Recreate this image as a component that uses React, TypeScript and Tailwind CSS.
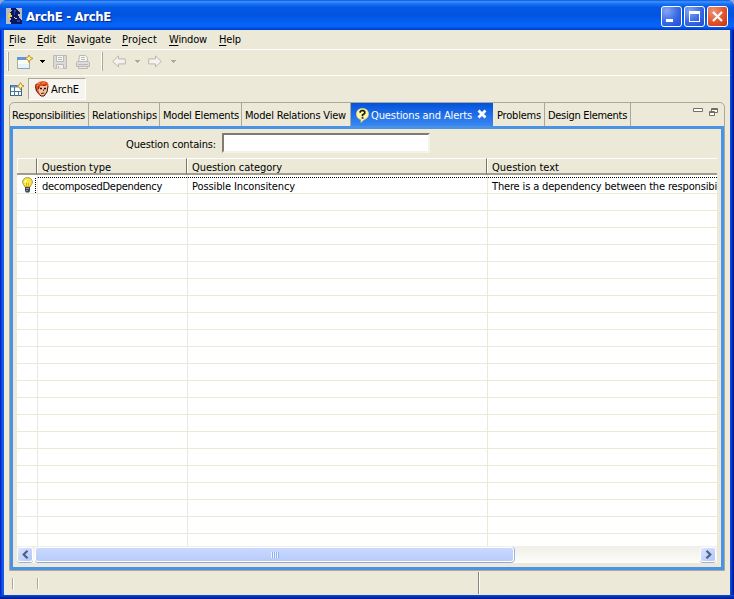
import React, { useLayoutEffect, useRef } from 'react';

/* A single-line label whose tracking is adjusted so that it fills a given width. */
function Label({ w, children, className = '' }: { w: number; children: React.ReactNode; className?: string }) {
  const ref = useRef<HTMLSpanElement>(null);
  useLayoutEffect(() => {
    const el = ref.current;
    if (!el) return;
    el.style.letterSpacing = '0px';
    const n = (el.textContent || '').length;
    el.style.letterSpacing = `${(w - el.getBoundingClientRect().width) / n}px`;
  }, [w]);
  return (
    <span ref={ref} className={`inline-block shrink-0 whitespace-pre pt-[2px] ${className}`}>
      {children}
    </span>
  );
}

const menus = [
  { t: 'File', w: 17, gap: 'mr-[11px]' },
  { t: 'Edit', w: 19, gap: 'mr-[11px]' },
  { t: 'Navigate', w: 44, gap: 'mr-[11px]' },
  { t: 'Project', w: 35, gap: 'mr-[12px]' },
  { t: 'Window', w: 38, gap: 'mr-[12px]' },
  { t: 'Help', w: 22, gap: '' },
];

function AppIcon() {
  return (
    <svg width="16" height="16" viewBox="0 0 16 16" className="shrink-0" shapeRendering="crispEdges">
      <rect width="16" height="16" fill="#b9bcc2" />
      <path d="M5 0h5l2 3 2 2-1 3 1 3 2 1v4H5v-2l-2-1 2-2-2-3 3-2-3-1 3-2z" fill="#0b1668" />
      <path d="M3 5h2v2h1v2H4v3H3V9H2V7h1zM8 9h1v1H8zM9 10h2v1H9zM12 6h1v2h-1z" fill="#e9dc39" />
      <path d="M8 2h2v2H9v3H8zM11 12h3v2h-3z" fill="#2746a8" />
    </svg>
  );
}

function NewIcon() {
  return (
    <svg width="17" height="16" viewBox="0 0 17 16" className="shrink-0">
      <rect x=".5" y="3.500" width="12" height="11" fill="#e4f3fc" stroke="#b5ad88" />
      <path d="M0 3h9v3H0z" fill="#5a9ade" />
      <path d="M1 6h11v4H1z" fill="#fdfdf6" />
      <path d="M1 14.500h12" stroke="#7fa9c4" />
      <path d="M12 1l1.200 2.300L16 4.500l-2.800 1.200L12 8.500l-1.200-2.800L8 4.500l2.800-1.200z" fill="#fff3a0" stroke="#b5882b" strokeWidth=".9" />
    </svg>
  );
}

function PerspectiveIcon() {
  return (
    <svg width="15" height="15" viewBox="0 0 15 15" className="shrink-0">
      <rect x=".5" y="3.500" width="11" height="10" fill="#f8fcff" stroke="#3e6781" />
      <path d="M1 4.500h8" stroke="#5b95c5" strokeWidth="2" />
      <path d="M4.500 5v9M1 9.500h11M8.500 9v5" stroke="#4f7890" />
      <path d="M10.500 .5l1.100 2.300L14 4l-2.400 1.200-1.100 2.600-1.100-2.600L7 4l2.400-1.200z" fill="#fff3a0" stroke="#b5882b" strokeWidth=".9" />
    </svg>
  );
}

function SaveIcon() {
  return (
    <svg width="16" height="16" viewBox="0 0 16 16" className="shrink-0" fill="none" stroke="#b9b9b6">
      <path d="M1.500 1.500h13v13h-12l-1-1z" fill="#d9d9d7" />
      <path d="M4.500 1.500h7v6h-7z" fill="#f6f5f1" />
      <path d="M4.500 14.500v-4h7v4" fill="#f0efea" />
      <path d="M6.500 12v2M6 3.500h4M6 5.500h4" />
    </svg>
  );
}

function PrintIcon() {
  return (
    <svg width="16" height="16" viewBox="0 0 16 16" className="shrink-0" fill="none" stroke="#b9b9b6">
      <path d="M3.500 8.500l1-7h6l2 2-.5 5" fill="#f8f7f3" />
      <path d="M1.500 8.500l1-1h11l1 1v4h-13z" fill="#dcdcd8" />
      <path d="M3.500 12.500h9v2h-9z" fill="#ecebe4" />
      <path d="M6 3.500h4M6 5.500h4M3 10.500h10" />
    </svg>
  );
}

function Arrow({ flip = false }: { flip?: boolean }) {
  return (
    <svg width="14" height="13" viewBox="0 0 14 13" className={`shrink-0 ${flip ? '-scale-x-100' : ''}`}>
      <path d="M.7 6.500L6.500.9v3h6.800v5H6.500v3z" fill="#f4f3ee" stroke="#b9b8b0" />
    </svg>
  );
}

function Caret({ color }: { color: string }) {
  return (
    <svg width="5" height="3" viewBox="0 0 5 3" className="shrink-0" shapeRendering="crispEdges">
      <path d="M0 0h5v1H4v1H3v1H2V2H1V1H0z" fill={color} />
    </svg>
  );
}

function FaceIcon() {
  return (
    <svg width="14" height="16" viewBox="0 0 14 16" className="shrink-0">
      <path d="M3 3h8l2 2-1 6-3 4H6l-3-3-2-3z" fill="#f9c3a0" stroke="#2a130c" />
      <path d="M1 3l3-2 4-1 4 1 1.500 2.500L13 6l-2-2-3 1-3 0-1 3-1.500 1.500L.5 7z" fill="#e2501f" />
      <path d="M3 2.500l2-.5M7 2h3M2 5l1-1" stroke="#ff9a55" />
      <path d="M1 3l-.5 4L2 9.500M4 5l-.5 3M8 4.500L11 4" stroke="#7d1b08" fill="none" />
      <path d="M5 7.500h2M9 7.500h2" stroke="#1b100c" strokeWidth="1.300" />
      <path d="M8.500 8.500v1.500M6 12.500l3.500-.5" stroke="#592317" fill="none" />
      <path d="M3 9.500v2l2 2.500" stroke="#c8361a" strokeWidth="1.300" fill="none" />
    </svg>
  );
}

function WinButton({ kind }: { kind: 'min' | 'max' | 'close' }) {
  const face =
    kind === 'close'
      ? 'bg-[radial-gradient(circle_at_30%_25%,#ef9678,#e2522c_55%,#c5340f)]'
      : 'bg-[radial-gradient(circle_at_25%_20%,#83a6f4,#3769e6_55%,#1e4bd0)]';
  return (
    <div className={`flex h-[21px] w-[21px] shrink-0 items-center justify-center rounded-[3px] border border-white ${face}`}>
      <svg width="19" height="19" viewBox="0 0 19 19">
        {kind === 'min' && <path d="M4 12h7v3H4z" fill="#fff" />}
        {kind === 'max' && <path d="M4 4h11v11H4zM5 7v7h9V7z" fill="#fff" fillRule="evenodd" />}
        {kind === 'close' && <path d="M5 5l9 9M14 5l-9 9" stroke="#fff" strokeWidth="2.200" />}
      </svg>
    </div>
  );
}

function Bulb() {
  return (
    <svg width="11" height="16" viewBox="0 0 11 16" className="shrink-0">
      <path d="M5.500 .6C2.700 .6.6 2.600.6 5c0 2 1.500 3 2.400 5h5c.9-2 2.400-3 2.400-5 0-2.400-2.100-4.400-4.900-4.400z" fill="#f8e73c" stroke="#a58e35" strokeWidth=".9" />
      <path d="M2.500 3.500L4.500 2v3l-2 1z" fill="#fffce0" />
      <path d="M4.500 6v4M6.500 6v4" stroke="#d9b52f" />
      <path d="M3 10h5v4l-1 1.500H4L3 14z" fill="#3f4752" />
      <path d="M4 11.500h3M4 13.500h2" stroke="#a8b4bf" strokeWidth=".8" />
    </svg>
  );
}

function QuestionIcon() {
  return (
    <svg width="13" height="15" viewBox="0 0 13 15" className="shrink-0">
      <path d="M6.500.5c3.500 0 6 2.200 6 5.500 0 3-2 5-4.500 5.500L5 14.500V11.500C2 11 .5 9 .5 6c0-3.300 2.500-5.500 6-5.500z" fill="#fff8a4" stroke="#e7d483" strokeWidth=".7" />
      <path d="M4.200 4.800V3.700L5.500 2.700h2L8.700 3.700v1.600L6.500 7v1.300" fill="none" stroke="#211c12" strokeWidth="1.700" />
      <path d="M5.600 9.200h1.900v1.500H5.600z" fill="#211c12" />
    </svg>
  );
}

function Tab({ text, w, cls }: { text: string; w: number; cls: string }) {
  return (
    <div className={`flex h-full shrink-0 items-center border-r border-[#aca899] ${cls}`}>
      <Label w={w}>{text}</Label>
    </div>
  );
}

function Header({ text, w, cls, last = false }: { text?: string; w?: number; cls: string; last?: boolean }) {
  return (
    <div className={`flex h-[17px] shrink-0 items-center border-b-2 border-t border-b-[#a09d8e] border-t-white ${last ? '' : 'border-r border-r-[#77756a]'} ${cls}`}>
      <div className="h-[14px] w-px shrink-0 bg-white" />
      {text && <Label w={w || 0} className="ml-[4px] mt-[2px]">{text}</Label>}
    </div>
  );
}

function ScrollButton({ right = false }: { right?: boolean }) {
  return (
    <div className="flex h-[15px] w-[16px] shrink-0 items-center justify-center rounded-[3px] border border-white bg-gradient-to-br from-[#dbe5ff] to-[#b2c5f8] shadow-[0_1px_0_#9bb0d9]">
      <svg width="9" height="9" viewBox="0 0 9 9" className={`shrink-0 ${right ? '-scale-x-100' : ''}`}>
        <path d="M6.500 .8L2.700 4.500l3.800 3.700" fill="none" stroke="#4d6185" strokeWidth="2.200" />
      </svg>
    </div>
  );
}

export default function App() {
  const rows = Array.from({ length: 21 }, (_, i) => i);
  const focusTop = 'bg-[linear-gradient(90deg,#000_50%,#fff_50%)] bg-[length:2px_1px] bg-[position:0_2px] bg-repeat-x pt-[3px]';
  return (
    <div className="h-[599px] w-[734px] overflow-hidden bg-[#8ca9d9] font-['DejaVu_Sans_Condensed','DejaVu_Sans',sans-serif] text-[11px] leading-[14px] text-black">
      <div className="flex h-full w-full flex-col overflow-hidden rounded-t-[7px] bg-[linear-gradient(90deg,#0018b8_0px,#0831d9_1px,#166aee_3px,#0855dd_4px,#0855dd_730px,#0b45d5_731px,#001da0_733px)]">
        <div className="flex h-[30px] shrink-0 items-center bg-[linear-gradient(180deg,#0b53dc_0%,#3d95ff_6%,#1b74f5_12%,#0459e4_24%,#0253e0_50%,#0562f6_77%,#0564f9_88%,#004de0_95%,#0036bc_100%)] pl-[6px] pr-[6px] pt-[3px]">
          <div className="mb-px"><AppIcon /></div>
          <Label w={85} className="mb-px ml-[4px] text-[13px] font-bold text-white [text-shadow:1px_1px_1px_#0b2a86]">ArchE - ArchE</Label>
          <div className="ml-auto flex gap-[2px]">
            <WinButton kind="min" />
            <WinButton kind="max" />
            <WinButton kind="close" />
          </div>
        </div>

        <div className="mx-[4px] flex h-[565px] shrink-0 flex-col bg-[#ece9d8]">
          <div className="flex h-[20px] shrink-0 items-center border-b border-white pb-[2px] pl-[5px]">
            {menus.map((m) => (
              <Label key={m.t} w={m.w} className={m.gap}>
                <u className="underline-offset-[2px]">{m.t[0]}</u>{m.t.slice(1)}
              </Label>
            ))}
          </div>

          <div className="flex h-[26px] shrink-0 items-center border-b border-white pb-[2px] pl-[3px]">
            <div className="h-[19px] w-[2px] border-r border-[#aca899] bg-white" />
            <div className="ml-[8px] flex items-center">
              <NewIcon />
              <div className="ml-[6px] flex"><Caret color="#000" /></div>
              <div className="ml-[7px] flex"><SaveIcon /></div>
              <div className="ml-[7px] flex"><PrintIcon /></div>
              <div className="ml-[10px] h-[19px] w-[2px] border-r border-[#aca899] bg-white" />
              <div className="ml-[9px] flex"><Arrow /></div>
              <div className="ml-[9px] flex"><Caret color="#aca899" /></div>
              <div className="ml-[8px] flex"><Arrow flip /></div>
              <div className="ml-[9px] flex"><Caret color="#aca899" /></div>
            </div>
          </div>

          <div className="flex h-[26px] shrink-0 items-start pl-[6px] pt-[2px]">
            <div className="mt-[4px]"><PerspectiveIcon /></div>
            <div className="ml-[3px] flex h-[22px] w-[58px] items-center border border-b-white border-l-[#aca899] border-r-white border-t-[#aca899] bg-[#f6f4ec] pl-[6px]">
              <FaceIcon />
              <Label w={28} className="ml-[2px]">ArchE</Label>
            </div>
          </div>

          <div className="ml-[5px] flex h-[469px] w-[716px] shrink-0 flex-col rounded-t-[5px] border border-[#aca899]">
            <div className="flex h-[23px] shrink-0">
              <Tab text="Responsibilities" w={73} cls="w-[79px] pl-[2px]" />
              <Tab text="Relationships" w={65} cls="w-[71px] pl-[3px]" />
              <Tab text="Model Elements" w={76} cls="w-[82px] pl-[3px]" />
              <Tab text="Model Relations View" w={101} cls="w-[109px] pl-[3px]" />
              <div className="flex h-[24px] w-[142px] shrink-0 items-center bg-gradient-to-b from-[#0252dc] to-[#3b89f2] pl-[5px] text-white">
                <QuestionIcon />
                <Label w={101} className="ml-[2px]">Questions and Alerts</Label>
                <svg width="10" height="10" viewBox="0 0 10 10" className="mb-[2px] ml-[5px] shrink-0">
                  <path d="M1.500 1.500l7 7M8.500 1.500l-7 7" stroke="#fff" strokeWidth="2.800" />
                </svg>
              </div>
              <Tab text="Problems" w={44} cls="w-[52px] pl-[4px]" />
              <Tab text="Design Elements" w={79} cls="w-[86px] pl-[3px]" />
              <svg width="26" height="12" viewBox="0 0 26 12" className="ml-[62px] mt-[3px]" fill="#fff" stroke="#716f64">
                <path d="M.5 2.500h9v3h-9z" />
                <path d="M18.500 2.500h6v4h-6zM18 3.500h7" />
                <path d="M16.500 5.500h5v4h-5zM16 6.500h6" />
              </svg>
            </div>

            <div className="flex h-[444px] shrink-0 flex-col border-[3px] border-[#4a92e6] pl-[4px] pt-[4px]">
              <div className="flex h-[25px] shrink-0 items-start pl-[109px]">
                <Label w={90} className="mt-[3px]">Question contains:</Label>
                <div className="ml-[6px] h-[20px] w-[208px] border-2 border-b-[#f5f3e8] border-l-[#807d70] border-r-[#f5f3e8] border-t-[#807d70] bg-white" />
              </div>

              <div className="flex h-[405px] w-[700px] shrink-0 flex-col">
                <div className="flex h-[17px] shrink-0">
                  <Header cls="w-[20px]" />
                  <Header text="Question type" w={69} cls="w-[150px]" />
                  <Header text="Question category" w={90} cls="w-[300px]" />
                  <Header text="Question text" w={67} cls="w-[230px]" last />
                </div>
                <div className="h-[371px] shrink-0 overflow-hidden bg-white">
                  {rows.map((i) => (
                    <div key={i} className={`flex border-b border-[#ece9d8] ${i === 0 ? 'h-[19px]' : 'h-[17px]'}`}>
                      <div className="flex w-[21px] shrink-0 items-end border-r border-[#ece9d8] pl-[5px]">
                        {i === 0 && (
                          <>
                            <Bulb />
                            <div className="ml-[2px] h-[15px] w-px bg-[linear-gradient(180deg,#000_50%,#fff_50%)] bg-[length:1px_2px]" />
                          </>
                        )}
                      </div>
                      <div className={`w-[150px] shrink-0 border-r border-r-[#ece9d8] pl-[4px] ${i === 0 ? focusTop : ''}`}>
                        {i === 0 && <Label w={120}>decomposedDependency</Label>}
                      </div>
                      <div className={`w-[300px] shrink-0 border-r border-r-[#ece9d8] pl-[4px] ${i === 0 ? focusTop : ''}`}>
                        {i === 0 && <Label w={103}>Possible Inconsitency</Label>}
                      </div>
                      <div className={`w-[229px] shrink-0 overflow-hidden pl-[4px] ${i === 0 ? focusTop : ''}`}>
                        {i === 0 && <Label w={225}>There is a dependency between the responsibi</Label>}
                      </div>
                    </div>
                  ))}
                  <div className="flex h-[13px]">
                    <div className="w-[21px] border-r border-[#ece9d8]" />
                    <div className="w-[150px] border-r border-[#ece9d8]" />
                    <div className="w-[300px] border-r border-[#ece9d8]" />
                  </div>
                </div>
                <div className="flex h-[17px] shrink-0 items-center bg-gradient-to-b from-[#f0efe8] to-[#fdfdfa]">
                  <ScrollButton />
                  <div className="ml-[2px] flex h-[15px] w-[479px] items-center justify-center rounded-[3px] border border-white bg-gradient-to-b from-[#c9d8fe] to-[#b8ccfa] shadow-[0_1px_0_#8faad8,1px_0_0_#9bb4e3]">
                    <div className="flex">
                      {[0, 1, 2, 3].map((k) => (
                        <div key={k} className="h-[6px] w-[2px] border-l border-r border-l-[#eef4fe] border-r-[#8cb0f8]" />
                      ))}
                    </div>
                  </div>
                  <div className="ml-auto mr-px"><ScrollButton right /></div>
                </div>
              </div>
            </div>
          </div>

          <div className="flex h-[24px] shrink-0 items-center pl-[8px]">
            <div className="h-[11px] w-[2px] border-l border-r border-l-[#aca899] border-r-white" />
            <div className="ml-[23px] h-[11px] w-[2px] border-l border-r border-l-[#aca899] border-r-white" />
            <div className="ml-[439px] h-[22px] w-[2px] border-l border-r border-l-[#85837a] border-r-white" />
          </div>
        </div>
        <div className="h-[4px] shrink-0 bg-gradient-to-b from-[#0a4bdc] to-[#00138c]" />
      </div>
    </div>
  );
}
